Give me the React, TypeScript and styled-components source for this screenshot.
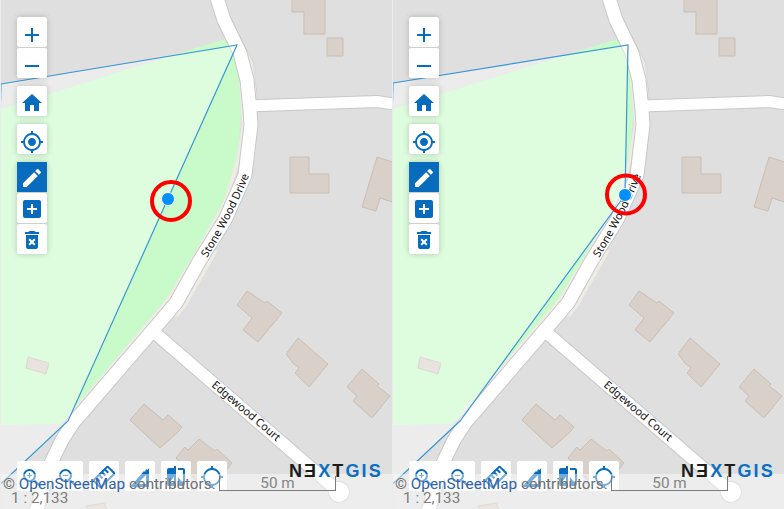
import React from "react";
import styled, { createGlobalStyle } from "styled-components";
import {
  MdAdd,
  MdRemove,
  MdHome,
  MdGpsFixed,
  MdGpsNotFixed,
  MdEdit,
  MdAddBox,
  MdDeleteForever,
  MdZoomIn,
  MdZoomOut,
  MdStraighten,
  MdCompare,
} from "react-icons/md";

const BLUE = "#076cbd";

const GlobalStyle = createGlobalStyle`
  html, body {
    margin: 0;
    padding: 0;
    background: #dfdfdf;
  }
  body {
    font-family: Roboto, "Liberation Sans", sans-serif;
  }
`;

const Page = styled.div`
  display: flex;
  width: 784px;
  height: 509px;
  overflow: hidden;
`;

const MapPane = styled.div`
  position: relative;
  flex: 0 0 392px;
  height: 509px;
  overflow: hidden;
  background: #dfdfdf;

  &::after {
    content: "";
    position: absolute;
    inset: 0 auto 0 0;
    width: 1px;
    background: #ececec;
  }
`;

const MapCanvas = styled.svg`
  position: absolute;
  inset: 0;
  display: block;
`;

const SideToolbar = styled.div`
  position: absolute;
  top: 17px;
  left: 17px;
  display: flex;
  flex-direction: column;
  gap: 8px;
`;

const ButtonGroup = styled.div`
  display: flex;
  flex-direction: column;
  gap: 1px;
  background: #cfcfcf;
  border-radius: 2px;
  box-shadow: 0 0 6px rgba(0, 0, 0, 0.2);
`;

const ToolButton = styled.button<{ $active?: boolean; $drop?: number }>`
  display: flex;
  align-items: center;
  justify-content: center;
  width: 30px;
  height: 30px;
  padding: ${(p) => (p.$drop ?? 0) * 2}px 0 0;
  border: 0;
  border-radius: ${(p) => (p.$active ? 0 : 2)}px;
  color: ${(p) => (p.$active ? "#fff" : BLUE)};
  background: ${(p) => (p.$active ? BLUE : "#fff")};

  svg {
    display: block;
    flex: none;
    width: 24px;
    height: 24px;
  }
`;

const BottomToolbar = styled.div`
  position: absolute;
  top: 461px;
  left: 17px;
  display: flex;
  gap: 6px;
`;

const RulerIcon = styled(MdStraighten)`
  transform: rotate(-45deg);
`;

const InfoBar = styled.div`
  position: absolute;
  top: 474px;
  left: 0;
  right: 0;
  height: 35px;
  padding-top: 3px;
  box-sizing: border-box;
  background: rgba(255, 255, 255, 0.45);
  font-size: 15.3px;
  line-height: 14px;
  color: #6f6f6f;
`;

const Attribution = styled.div`
  padding-left: 3px;
  white-space: nowrap;
`;

const OsmLink = styled.a`
  color: #2f62a8;
  text-decoration: none;
`;

const ScaleRatio = styled.div`
  padding-left: 11px;
  color: #7d7d7d;
`;

const ScaleLine = styled.div`
  position: absolute;
  top: 2px;
  left: 219px;
  width: 115px;
  height: 14px;
  border: solid #7b7b7b;
  border-width: 0 1px 1px 1px;
  text-align: center;
  line-height: 15px;
  color: #858585;
`;

const Logo = styled.div`
  position: absolute;
  top: 461px;
  left: 289px;
  font-family: "Liberation Sans", Arial, sans-serif;
  font-size: 18px;
  font-weight: 700;
  line-height: 20px;
  letter-spacing: 2.1px;
  color: #1c1c1c;
  white-space: nowrap;
`;

const LogoAccent = styled.span`
  color: #0a6fc2;
`;

const BUILDINGS = [
  "292,-4 292,12 304,12 304,34 325,34 325,-4",
  "327,38 343,38 343,56 327,56",
  "290,157 309,157 309,174 329,174 329,193 290,193",
  "377,157 402,165 392,202 380,198 376,211 362,207",
  "247,291 265,303 267,301 282,313 258,342 243,330 252,318 237,305",
  "298,338 328,364 309,387 295,373 299,368 293,363 286,354",
  "362,369 379,384 377,386 390,396 372,418 353,401 357,396 347,387",
  "144,404 163,420 168,415 182,427 178,432 160,448 130,420",
  "199,439 215,451 217,449 232,463 210,490 190,475 176,458 185,447 188,450",
  "28,357 49,363 46,374 26,368",
  "86,506 104,503 110,515 90,515",
];

const MAIN_ROAD =
  "M216,-5 L224,20 L240,53 L247,80 L250,110 L251,125 L245,175 L225,220 L200,260 L176,303 L153,330 L73,423 L62,440 L50,465 L35,515";
const SIDE_ROAD = "M250,106 L377,101.5 L400,105";
const COURT_ROAD = "M155,333 L339,492";

type MapProps = {
  id: string;
  selection: string;
  marker: [number, number];
  ring: [number, number];
};

const MapDrawing = ({ id, selection, marker, ring }: MapProps) => (
  <MapCanvas width="392" height="509" viewBox="0 0 392 509">
    <defs>
      <path id={`${id}-stone`} d="M207,258 Q235,213 252,168" />
      <path id={`${id}-edge`} d="M211,386 L285,449" />
    </defs>
    <polygon
      fill="#c9fac9"
      points="1,109 225,39 233,50 240,80 241,115 238,155 227,200 193,260 167,303 87,397 60,424 1,425"
    />
    <g fill="#d9d0c9" stroke="#cbbfb5" strokeWidth="1">
      {BUILDINGS.map((pts) => (
        <polygon key={pts} points={pts} />
      ))}
    </g>
    <g fill="none" stroke="#efece5" strokeWidth="4">
      <path d="M238,37 L251,63 L255,98" stroke="#d0ccc6" strokeWidth="5" />
      <path d="M238,37 L251,63 L255,98" />
      <path d="M241,80 L244,125 L238,160 L225,203 L195,256 L168,300 L87,396 L66,420" />
      <path d="M216,250 L184,306 L176,316" />
    </g>
    <g fill="none" stroke="#c8c8c8" strokeLinejoin="round">
      <path d={MAIN_ROAD} strokeWidth="15" />
      <path d={SIDE_ROAD} strokeWidth="13" />
      <path d={COURT_ROAD} strokeWidth="14" />
    </g>
    <circle cx="339" cy="492" r="11" fill="#c8c8c8" />
    <g fill="none" stroke="#fff" strokeLinejoin="round">
      <path d={MAIN_ROAD} strokeWidth="13" />
      <path d={SIDE_ROAD} strokeWidth="11" />
      <path d={COURT_ROAD} strokeWidth="12" />
    </g>
    <circle cx="339" cy="492" r="10" fill="#fff" />
    <g
      fontFamily="'Noto Sans', 'DejaVu Sans', sans-serif"
      fontSize="11"
      fill="#111"
      stroke="#fff"
      strokeWidth="1.5"
      paintOrder="stroke"
    >
      <text>
        <textPath href={`#${id}-stone`}>Stone Wood Drive</textPath>
      </text>
      <text>
        <textPath href={`#${id}-edge`}>Edgewood Court</textPath>
      </text>
    </g>
    <polygon
      points={selection}
      fill="#fff"
      fillOpacity="0.4"
      stroke="#3a97d4"
      strokeWidth="1.2"
    />
    <circle cx={marker[0]} cy={marker[1]} r="6.5" fill="#008ffb" stroke="#fff" strokeWidth="1" />
    <circle cx={ring[0]} cy={ring[1]} r="19" fill="none" stroke="#f00" strokeWidth="4" />
  </MapCanvas>
);

const AreaRulerIcon = () => (
  <svg viewBox="0 0 24 24" fill="currentColor">
    <path d="M2 22 L16 6 L17 7 L18 4 L19.5 5 L21 3 V22 Z M9 19 H18 V10 Z" fillRule="evenodd" />
  </svg>
);

const MapView = (props: MapProps) => (
  <MapPane>
    <MapDrawing {...props} />
    <SideToolbar>
      <ButtonGroup>
        <ToolButton $drop={3}><MdAdd /></ToolButton>
        <ToolButton $drop={3}><MdRemove /></ToolButton>
      </ButtonGroup>
      <ButtonGroup>
        <ToolButton $drop={2}><MdHome /></ToolButton>
      </ButtonGroup>
      <ButtonGroup>
        <ToolButton $drop={3}><MdGpsFixed /></ToolButton>
      </ButtonGroup>
      <ButtonGroup>
        <ToolButton $active $drop={1}><MdEdit /></ToolButton>
        <ToolButton $drop={1}><MdAddBox /></ToolButton>
        <ToolButton $drop={1}><MdDeleteForever /></ToolButton>
      </ButtonGroup>
    </SideToolbar>
    <BottomToolbar>
      <ToolButton $drop={2}><MdZoomIn /></ToolButton>
      <ToolButton $drop={2}><MdZoomOut /></ToolButton>
      <ToolButton $drop={1}><RulerIcon /></ToolButton>
      <ToolButton $drop={1}><AreaRulerIcon /></ToolButton>
      <ToolButton $drop={1}><MdCompare /></ToolButton>
      <ToolButton $drop={1}><MdGpsNotFixed /></ToolButton>
    </BottomToolbar>
    <InfoBar>
      <Attribution>
        © <OsmLink href="#">OpenStreetMap</OsmLink> contributors.
      </Attribution>
      <ScaleRatio>1 : 2,133</ScaleRatio>
      <ScaleLine>50 m</ScaleLine>
    </InfoBar>
    <Logo>
      NƎ<LogoAccent>X</LogoAccent>T<LogoAccent>GIS</LogoAccent>
    </Logo>
  </MapPane>
);

export default function App() {
  return (
    <Page>
      <GlobalStyle />
      <MapView
        id="before"
        selection="1,84 237,45 68,421 -10,494"
        marker={[168, 199]}
        ring={[171, 201]}
      />
      <MapView
        id="after"
        selection="1,83 236,45 233,195 68,421 -10,494"
        marker={[233, 195]}
        ring={[234, 194.5]}
      />
    </Page>
  );
}
